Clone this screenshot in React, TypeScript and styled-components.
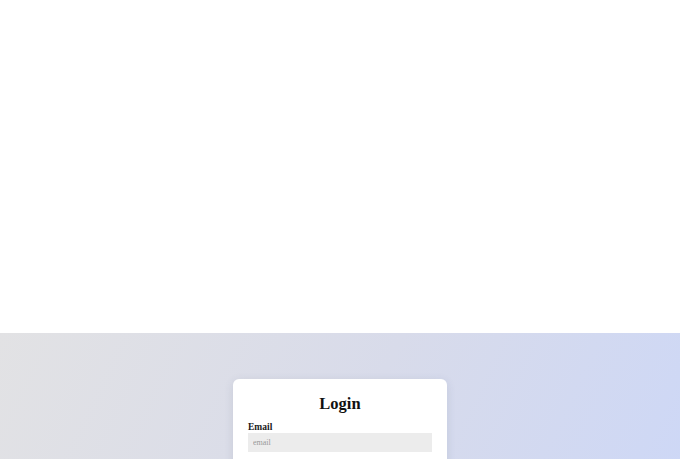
import React from 'react'
import styled, { createGlobalStyle } from 'styled-components'

const GlobalStyle = createGlobalStyle`
  * {
    box-sizing: border-box;
  }
  body {
    margin: 0;
    background: #ffffff;
    font-family: "Liberation Serif", "Times New Roman", serif;
    color: #111;
  }
`

const Page = styled.div`
  display: flex;
  flex-direction: column;
`

const Banner = styled.div`
  height: 333px;
  background: #ffffff;
`

const LoginSection = styled.section`
  min-height: 459px;
  display: flex;
  justify-content: center;
  align-items: flex-start;
  padding-top: 46px;
  background: linear-gradient(115deg, #e2e2e4 0%, #d8dbea 45%, #c9d6fb 100%);
`

const Card = styled.form`
  width: 214px;
  padding: 15px;
  background: #ffffff;
  border-radius: 6px;
  box-shadow: 0 2px 10px rgba(60, 70, 110, 0.12);
  display: flex;
  flex-direction: column;
`

const Title = styled.h2`
  margin: 0 0 9px;
  font-size: 16.5px;
  line-height: 19px;
  font-weight: bold;
  text-align: center;
`

const Field = styled.div`
  display: flex;
  flex-direction: column;
  margin-bottom: 16px;
`

const Label = styled.label`
  font-size: 9.5px;
  line-height: 11px;
  font-weight: bold;
  color: #1a1a1a;
`

const Input = styled.input`
  height: 19px;
  width: 100%;
  border: none;
  outline: none;
  padding: 0 5px;
  background: #ececec;
  font-family: inherit;
  font-size: 8px;
  color: #333;

  &::placeholder {
    color: #999;
  }
`

const SubmitButton = styled.button`
  height: 22px;
  border: none;
  border-radius: 4px;
  background: #6d83d8;
  color: #fff;
  font-family: inherit;
  font-size: 9px;
  font-weight: bold;
`

export default function App() {
  return (
    <>
      <GlobalStyle />
      <Page>
        <Banner />
        <LoginSection>
          <Card onSubmit={e => e.preventDefault()}>
            <Title>Login</Title>
            <Field>
              <Label htmlFor="email">Email</Label>
              <Input id="email" type="email" placeholder="email" />
            </Field>
            <Field>
              <Label htmlFor="password">Password</Label>
              <Input id="password" type="password" placeholder="password" />
            </Field>
            <SubmitButton type="submit">Login</SubmitButton>
          </Card>
        </LoginSection>
      </Page>
    </>
  )
}
